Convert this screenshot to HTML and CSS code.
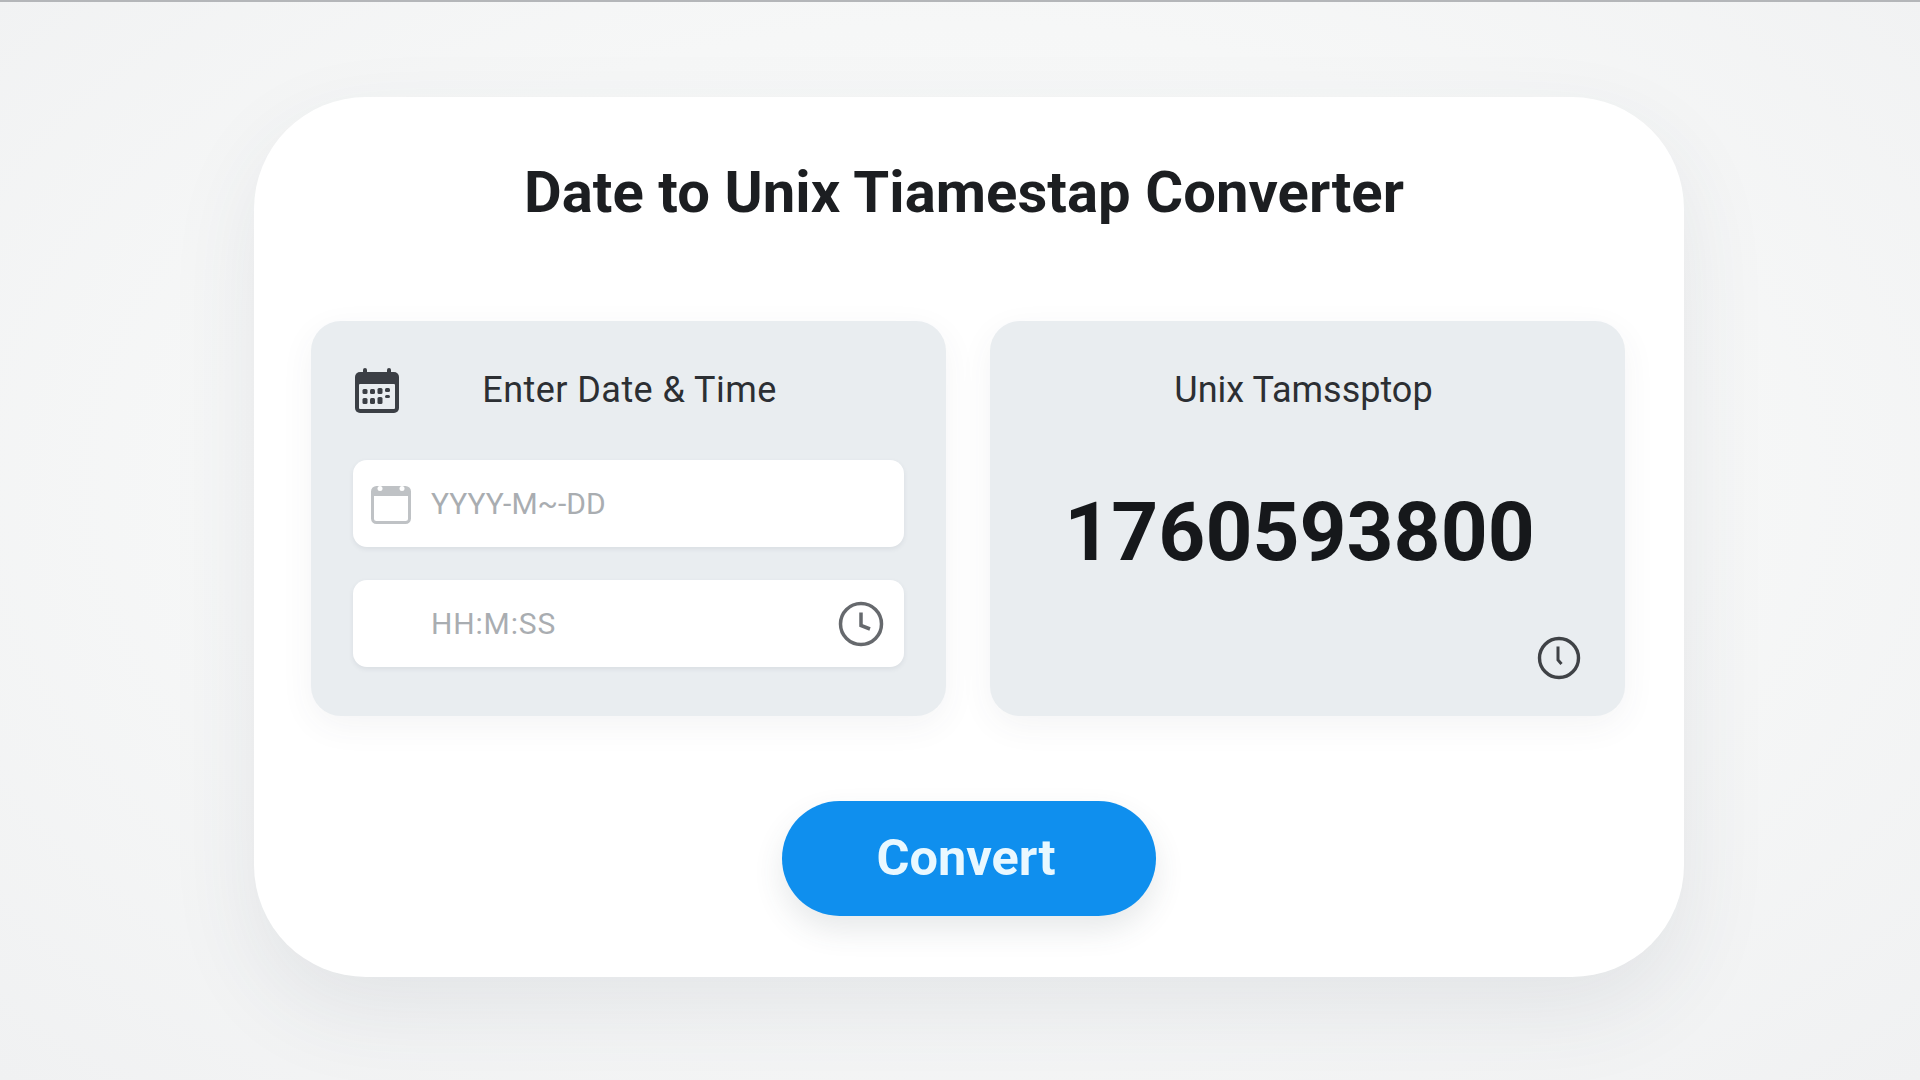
FILE: index.html
```html
<!DOCTYPE html>
<html lang="en">
<head>
<meta charset="utf-8">
<title>Date to Unix Timestamp Converter</title>
<link rel="stylesheet" href="styles.css">
</head>
<body>
<div class="topline"></div>
<main class="card">
  <h1 class="title">Date to Unix Tiamestap Converter</h1>
  <div class="panels">
    <section class="panel">
      <div class="panel-head">
        <svg class="icon-cal" viewBox="0 0 46 46" aria-hidden="true">
          <rect x="1" y="5" width="44" height="41" rx="5" fill="#3b3f45"/>
          <rect x="9" y="1" width="4" height="9" rx="2" fill="#3b3f45"/>
          <rect x="33" y="1" width="4" height="9" rx="2" fill="#3b3f45"/>
          <rect x="5" y="17" width="36" height="25" rx="1" fill="#e9edf0"/>
          <g fill="#3b3f45">
            <rect x="8.500" y="22" width="5" height="5" rx="1.500"/><rect x="16" y="22" width="5" height="5" rx="1.500"/><rect x="23.500" y="21" width="5" height="6" rx="1.500"/><rect x="31" y="21" width="5" height="4" rx="1.500"/>
            <rect x="8.500" y="31" width="5" height="6" rx="1.500"/><rect x="16" y="31" width="5" height="6" rx="1.500"/><rect x="23.500" y="30" width="5" height="7" rx="1.500"/><rect x="31" y="28" width="5" height="3" rx="1.500"/>
          </g>
        </svg>
        <span class="label label-enter">Enter Date &amp; Time</span>
      </div>
      <div class="field field-date">
        <svg class="icon-date" viewBox="0 0 40 40" aria-hidden="true">
          <rect x="1.500" y="3.500" width="37" height="35" rx="4" fill="#fff" stroke="#bfc2c5" stroke-width="3"/>
          <path d="M2 12V7a4 4 0 0 1 4-4h28a4 4 0 0 1 4 4v5z" fill="#bfc2c5"/>
          <circle cx="9" cy="4.500" r="2.500" fill="#fff"/>
          <circle cx="31" cy="4.500" r="2.500" fill="#fff"/>
        </svg>
        <span class="placeholder">YYYY-M~-DD</span>
      </div>
      <div class="field field-time">
        <span class="placeholder placeholder-time">HH:M:SS</span>
        <svg class="icon-clock" viewBox="0 0 46 46" aria-hidden="true">
          <circle cx="23" cy="23" r="20.500" fill="none" stroke="#66696d" stroke-width="3.500"/>
          <path d="M23 11.500V24.500L32 28" fill="none" stroke="#66696d" stroke-width="3.500"/>
        </svg>
      </div>
    </section>
    <section class="panel panel-result">
      <span class="label label-result">Unix Tamssptop</span>
      <div class="stamp">1760593800</div>
      <svg class="icon-clock-small" viewBox="0 0 44 44" aria-hidden="true">
        <circle cx="22" cy="22" r="19.500" fill="none" stroke="#3f4246" stroke-width="3.400"/>
        <path d="M21 10.500V24L24.500 28" fill="none" stroke="#3f4246" stroke-width="3"/>
      </svg>
    </section>
  </div>
  <button class="convert" type="button"><span class="convert-text">Convert</span></button>
</main>
</body>
</html>
```

FILE: styles.css
```css
* { box-sizing: border-box; }

html, body { height: 100%; }

body {
  margin: 0;
  height: 1080px;
  overflow: hidden;
  display: flex;
  flex-direction: column;
  font-family: Roboto, "Liberation Sans", sans-serif;
  background: radial-gradient(ellipse at 50% 45%, #fafbfb 0%, #f6f7f7 55%, #f0f1f2 100%);
}

.topline {
  height: 2px;
  flex: none;
  background: #b4b6b9;
}

.card {
  width: 1430px;
  height: 880px;
  margin: 95px 0 0 254px;
  padding: 0 57px;
  display: flex;
  flex-direction: column;
  background: #fff;
  border-radius: 112px;
  box-shadow: 0 34px 90px rgba(60, 70, 85, 0.09);
}

.title {
  margin: 59px 10px 0 0;
  height: 73px;
  font-size: 58px;
  line-height: 72px;
  font-weight: 700;
  text-align: center;
  letter-spacing: 0.05px;
  color: #1c1e21;
}

.panels {
  margin-top: 92px;
  display: grid;
  grid-template-columns: 635px 635px;
  gap: 44px;
}

.panel {
  height: 395px;
  padding: 42px;
  display: flex;
  flex-direction: column;
  background: #e9edf0;
  border-radius: 30px;
  box-shadow: 0 10px 34px rgba(60, 70, 85, 0.06);
}

.panel-head {
  height: 52px;
  margin-top: 1px;
  display: grid;
  grid-template-columns: 46px 1fr 46px;
  align-items: center;
}

.icon-cal { width: 46px; height: 46px; margin-left: 1px; }

.label {
  font-size: 36px;
  line-height: 52px;
  text-align: center;
  color: #2c2f33;
}

.label-enter { letter-spacing: 0.45px; margin-left: 2px; }

.field {
  height: 87px;
  flex: none;
  display: flex;
  align-items: center;
  background: #fff;
  border-radius: 14px;
  box-shadow: 0 2px 5px rgba(60, 70, 85, 0.09);
}

.field-date { margin-top: 44px; padding-left: 18px; }

.field-time { margin-top: 33px; padding: 0 20px 0 78px; justify-content: space-between; }

.icon-date { width: 40px; height: 40px; margin-right: 20px; }

.icon-clock { width: 46px; height: 46px; }

.placeholder {
  font-size: 30px;
  color: #a9adb1;
}

.placeholder-time { letter-spacing: 0.85px; }

.panel-result { align-items: center; }

.label-result { margin: 1px 8px 0 0; }

.stamp {
  margin: 68px 16px 0 0;
  font-size: 82px;
  line-height: 96px;
  font-weight: 700;
  color: #16181b;
}

.icon-clock-small {
  width: 44px;
  height: 44px;
  margin-top: auto;
  margin-bottom: -6px;
  align-self: flex-end;
  margin-right: 2px;
}

.convert {
  align-self: center;
  width: 374px;
  height: 115px;
  margin: 85px 0 0 0;
  border: 0;
  padding: 0 0 2px;
  border-radius: 58px;
  font-family: inherit;
  font-size: 50.500px;
  font-weight: 700;
  color: #e9f8ff;
  background: #0f8fee;
  box-shadow: 0 14px 30px rgba(60, 70, 85, 0.12);
}

.convert-text { margin-right: 6px; }
```
